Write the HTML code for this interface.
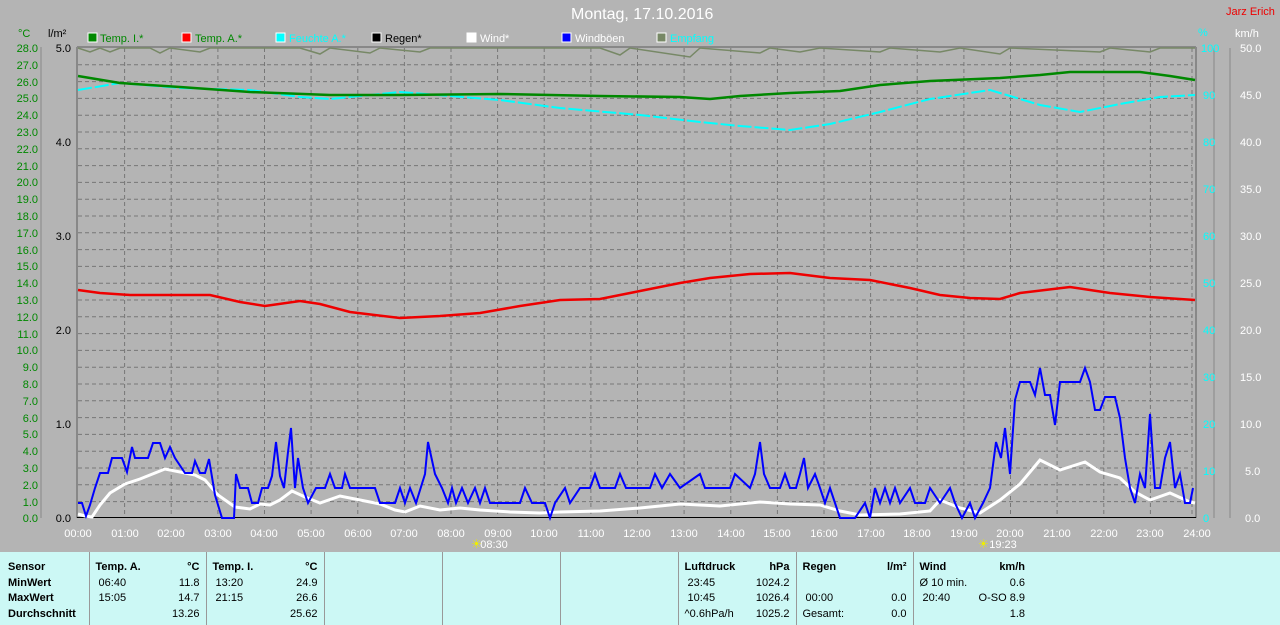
<!DOCTYPE html><html><head><meta charset="utf-8"><style>
body{margin:0;width:1280px;height:625px;background:#b4b4b4;overflow:hidden;font-family:"Liberation Sans",sans-serif;position:relative}
.t{position:absolute;font-size:11px;white-space:nowrap}
table{position:absolute;left:0;top:552px;width:1280px;height:73px;background:#ccf8f5;border-collapse:collapse;font-size:11px}
</style></head><body>
<div class="t" style="left:571px;top:6px;font-size:16px;color:#fff">Montag, 17.10.2016</div>
<div class="t" style="left:1226px;top:6px;color:#e00">Jarz Erich</div>
<div class="t" style="left:18px;top:28px;color:#080">°C</div>
<div class="t" style="left:48px;top:28px;color:#000">l/m²</div>
<div class="t" style="left:1198px;top:27px;color:#0ff">%</div>
<div class="t" style="left:1235px;top:28px;color:#fff">km/h</div>
<svg width="1280" height="625" style="position:absolute;left:0;top:0" font-family="Liberation Sans" font-size="11">
<g stroke="#fff" stroke-width="1">
<rect x="88" y="33" width="9" height="9" fill="#080"/><rect x="182" y="33" width="9" height="9" fill="#f00"/><rect x="276" y="33" width="9" height="9" fill="#0ff"/><rect x="372" y="33" width="9" height="9" fill="#000"/><rect x="467" y="33" width="9" height="9" fill="#fff"/><rect x="562" y="33" width="9" height="9" fill="#00f"/><rect x="657" y="33" width="9" height="9" fill="#786"/></g>
<g font-size="11"><text x="100" y="42" fill="#080">Temp. I.*</text><text x="195" y="42" fill="#080">Temp. A.*</text><text x="289" y="42" fill="#0ff">Feuchte A.*</text><text x="385" y="42" fill="#000">Regen*</text><text x="480" y="42" fill="#fff">Wind*</text><text x="575" y="42" fill="#fff">Windböen</text><text x="670" y="42" fill="#0ff">Empfang</text></g>
<g stroke="#777" stroke-dasharray="4,3" stroke-width="1">
<path d="M78 64.8H1192M78 81.6H1192M78 98.4H1192M78 115.2H1192M78 132H1192M78 148.8H1192M78 165.6H1192M78 182.4H1192M78 199.2H1192M78 216H1192M78 232.8H1192M78 249.6H1192M78 266.4H1192M78 283.2H1192M78 300H1192M78 316.8H1192M78 333.6H1192M78 350.4H1192M78 367.2H1192M78 384H1192M78 400.8H1192M78 417.6H1192M78 434.4H1192M78 451.2H1192M78 468H1192M78 484.8H1192M78 501.6H1192"/>
<path d="M124.6 48V518M171.2 48V518M217.9 48V518M264.5 48V518M311.1 48V518M357.8 48V518M404.4 48V518M451 48V518M497.6 48V518M544.2 48V518M590.9 48V518M637.5 48V518M684.1 48V518M730.8 48V518M777.4 48V518M824 48V518M870.6 48V518M917.2 48V518M963.9 48V518M1010.5 48V518M1057.1 48V518M1103.8 48V518M1150.4 48V518M1192 48V518"/></g>
<path d="M77 47V518M1196 47V518" stroke="#888" stroke-width="2"/>
<path d="M77 47H1196" stroke="#888" stroke-width="2"/>
<path d="M77 517.5H1196" stroke="#000" stroke-width="1"/>
<path d="M41 47V518M1214 48V518M1230 48V518" stroke="#888"/>
<g fill="#080" text-anchor="end" font-size="11">
<text x="38" y="52">28.0</text><text x="38" y="69">27.0</text><text x="38" y="86">26.0</text><text x="38" y="102">25.0</text><text x="38" y="119">24.0</text><text x="38" y="136">23.0</text><text x="38" y="153">22.0</text><text x="38" y="170">21.0</text><text x="38" y="186">20.0</text><text x="38" y="203">19.0</text><text x="38" y="220">18.0</text><text x="38" y="237">17.0</text><text x="38" y="254">16.0</text><text x="38" y="270">15.0</text><text x="38" y="287">14.0</text><text x="38" y="304">13.0</text><text x="38" y="321">12.0</text><text x="38" y="338">11.0</text><text x="38" y="354">10.0</text><text x="38" y="371">9.0</text><text x="38" y="388">8.0</text><text x="38" y="405">7.0</text><text x="38" y="422">6.0</text><text x="38" y="438">5.0</text><text x="38" y="455">4.0</text><text x="38" y="472">3.0</text><text x="38" y="489">2.0</text><text x="38" y="506">1.0</text><text x="38" y="522">0.0</text></g>
<g fill="#000" text-anchor="end"><text x="71" y="52">5.0</text><text x="71" y="146">4.0</text><text x="71" y="240">3.0</text><text x="71" y="334">2.0</text><text x="71" y="428">1.0</text><text x="71" y="522">0.0</text></g>
<g fill="#0ff"><text x="1201" y="52">100</text><text x="1203" y="99">90</text><text x="1203" y="146">80</text><text x="1203" y="193">70</text><text x="1203" y="240">60</text><text x="1203" y="287">50</text><text x="1203" y="334">40</text><text x="1203" y="381">30</text><text x="1203" y="428">20</text><text x="1203" y="475">10</text><text x="1203" y="522">0</text></g>
<g fill="#fff"><text x="1240" y="52">50.0</text><text x="1240" y="99">45.0</text><text x="1240" y="146">40.0</text><text x="1240" y="193">35.0</text><text x="1240" y="240">30.0</text><text x="1240" y="287">25.0</text><text x="1240" y="334">20.0</text><text x="1240" y="381">15.0</text><text x="1240" y="428">10.0</text><text x="1245" y="475">5.0</text><text x="1245" y="522">0.0</text></g>
<g fill="#fff" text-anchor="middle"><text x="78" y="537">00:00</text><text x="125" y="537">01:00</text><text x="171" y="537">02:00</text><text x="218" y="537">03:00</text><text x="264" y="537">04:00</text><text x="311" y="537">05:00</text><text x="358" y="537">06:00</text><text x="404" y="537">07:00</text><text x="451" y="537">08:00</text><text x="498" y="537">09:00</text><text x="544" y="537">10:00</text><text x="591" y="537">11:00</text><text x="637" y="537">12:00</text><text x="684" y="537">13:00</text><text x="731" y="537">14:00</text><text x="777" y="537">15:00</text><text x="824" y="537">16:00</text><text x="871" y="537">17:00</text><text x="917" y="537">18:00</text><text x="964" y="537">19:00</text><text x="1010" y="537">20:00</text><text x="1057" y="537">21:00</text><text x="1104" y="537">22:00</text><text x="1150" y="537">23:00</text><text x="1197" y="537">24:00</text>
<text x="494" y="548">08:30</text><text x="1003" y="548">19:23</text></g>
<text x="471" y="548" fill="#ee0" font-size="12">☀</text><text x="978" y="548" fill="#ee0" font-size="12">☀</text>
<polyline fill="none" stroke="#786" stroke-width="1.5" points="78,48 90,52 100,48 110,52 120,48 150,48 160,53 170,48 200,52 210,48 300,48 320,54 330,48 370,53 380,48 420,52 430,48 600,48 620,55 630,48 690,57 700,48 760,53 770,48 800,52 820,48 880,52 890,48 940,52 960,48 1000,54 1010,48 1100,52 1110,48 1150,52 1160,48 1195,48"/>
<polyline fill="none" stroke="#0ff" stroke-width="2" stroke-dasharray="14,3" points="78,90 120,83 180,88 250,90 300,97 330,99 400,92 450,96 500,100 560,108 640,115 700,122 740,126 790,130 830,124 880,112 930,99 990,90 1040,105 1080,112 1120,104 1160,97 1195,95"/>
<polyline fill="none" stroke="#080" stroke-width="2.5" points="78,76 120,83 180,87 250,92 330,95 400,95 500,94 600,96 680,97 710,99 740,96 790,93 840,91 880,85 930,81 1000,78 1040,75 1070,72 1140,72 1170,76 1195,80"/>
<polyline fill="none" stroke="#e00" stroke-width="2.5" points="78,290 100,293 130,295 210,295 240,302 265,306 300,301 320,304 350,312 400,318 440,316 480,313 520,306 560,300 600,299 640,291 680,283 710,278 750,274 790,273 830,278 870,280 910,288 940,295 970,298 1000,299 1020,293 1070,287 1110,293 1150,297 1195,300"/>
<polyline fill="none" stroke="#fff" stroke-width="3" points="78,514 85,516 92,517 100,505 110,493 125,484 140,479 155,473 165,469 180,472 195,475 205,480 218,495 235,507 250,509 260,504 270,505 280,500 292,491 305,497 320,503 340,496 360,500 380,504 395,510 405,512 420,506 440,510 460,508 480,510 510,512 540,513 560,512 600,511 640,508 680,504 720,506 760,502 790,504 820,505 840,511 860,515 900,514 930,511 940,500 960,508 980,513 1000,500 1020,484 1040,460 1060,470 1085,462 1100,472 1120,478 1135,492 1150,500 1170,493 1190,502 1195,503"/>
<polyline fill="none" stroke="#00f" stroke-width="2" points="78,503 82,503 86,516 90,505 95,488 100,473 108,473 112,458 122,458 127,472 132,447 135,458 148,458 153,443 160,443 165,458 170,447 175,458 185,473 192,473 195,461 200,473 205,473 209,459 215,495 222,518 234,518 236,474 240,488 248,488 252,503 258,503 262,488 268,488 272,476 276,442 280,476 284,488 288,452 291,428 295,488 298,458 303,488 308,503 316,488 325,488 330,474 335,488 342,488 345,474 350,488 375,488 380,503 395,503 400,488 405,503 410,488 416,503 425,474 428,442 435,474 442,488 448,503 452,488 456,503 462,488 468,503 475,488 480,503 485,488 490,503 520,503 525,488 532,503 545,503 550,518 555,503 565,488 570,503 580,488 590,488 595,474 600,488 615,488 620,474 626,488 650,488 655,474 662,488 670,474 680,488 700,474 705,488 730,488 735,474 750,488 755,474 760,442 764,474 770,488 780,488 785,474 790,488 796,488 800,474 804,458 808,488 815,474 820,488 825,503 830,488 835,503 840,518 855,518 865,503 870,518 875,488 880,503 885,488 890,503 895,488 900,503 910,488 915,503 925,503 930,488 940,503 950,488 955,503 962,518 970,503 975,518 983,503 990,488 996,442 1001,458 1005,428 1010,474 1015,400 1020,382 1030,382 1035,395 1040,368 1045,395 1050,395 1055,425 1060,382 1080,382 1085,368 1090,382 1095,410 1100,410 1105,397 1115,397 1120,418 1125,458 1130,488 1135,503 1140,474 1145,488 1150,414 1155,488 1160,488 1165,458 1170,442 1175,488 1180,474 1185,503 1190,503 1193,488"/>
</svg>
<table>
<colgroup><col style="width:89px"><col style="width:117px"><col style="width:118px"><col style="width:118px"><col style="width:118px"><col style="width:118px"><col style="width:118px"><col style="width:117px"><col style="width:118px"><col></colgroup>
<tr><td style="vertical-align:top;padding:8px 0 0 8px;line-height:15.5px;font-weight:bold">Sensor<br>MinWert<br>MaxWert<br>Durchschnitt</td>
<td style="border-left:1px solid #999;vertical-align:top;padding:8px 6px 0 6px;line-height:15.5px"><b>Temp. A.</b><span style="float:right"><b>°C</b></span><br>&nbsp;06:40<span style="float:right">11.8</span><br>&nbsp;15:05<span style="float:right">14.7</span><br><span style="float:right">13.26</span></td>
<td style="border-left:1px solid #999;vertical-align:top;padding:8px 6px 0 6px;line-height:15.5px"><b>Temp. I.</b><span style="float:right"><b>°C</b></span><br>&nbsp;13:20<span style="float:right">24.9</span><br>&nbsp;21:15<span style="float:right">26.6</span><br><span style="float:right">25.62</span></td>
<td style="border-left:1px solid #999"></td><td style="border-left:1px solid #999"></td><td style="border-left:1px solid #999"></td>
<td style="border-left:1px solid #999;vertical-align:top;padding:8px 6px 0 6px;line-height:15.5px"><b>Luftdruck</b><span style="float:right"><b>hPa</b></span><br>&nbsp;23:45<span style="float:right">1024.2</span><br>&nbsp;10:45<span style="float:right">1026.4</span><br>^0.6hPa/h<span style="float:right">1025.2</span></td>
<td style="border-left:1px solid #999;vertical-align:top;padding:8px 6px 0 6px;line-height:15.5px"><b>Regen</b><span style="float:right"><b>l/m²</b></span><br>&nbsp;<br>&nbsp;00:00<span style="float:right">0.0</span><br>Gesamt:<span style="float:right">0.0</span></td>
<td style="border-left:1px solid #999;vertical-align:top;padding:8px 6px 0 6px;line-height:15.5px"><b>Wind</b><span style="float:right"><b>km/h</b></span><br>Ø 10 min.<span style="float:right">0.6</span><br>&nbsp;20:40<span style="float:right">O-SO 8.9</span><br><span style="float:right">1.8</span></td>
<td></td></tr></table>
</body></html>
